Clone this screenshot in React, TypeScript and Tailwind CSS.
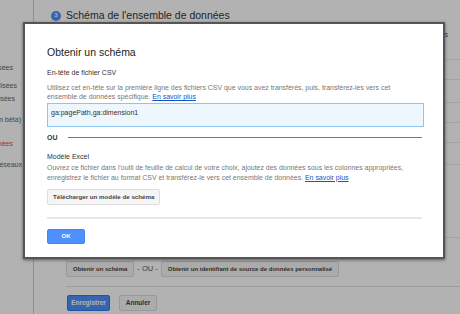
import React from 'react';

const sideItems = [
  { label: 'Tables de données personnalisées', pad: 'pr-[20px]', mt: 'mt-0', color: 'text-[#666]' },
  { label: 'Dimensions personnalisées', pad: 'pr-[16px]', mt: 'mt-[6px]', color: 'text-[#666]' },
  { label: 'Métriques personnalisées', pad: 'pr-[18px]', mt: 'mt-[1px]', color: 'text-[#666]' },
  { label: 'Paramètres des données (en bêta)', pad: 'pr-[12px]', mt: 'mt-[9px]', color: 'text-[#666]' },
  { label: 'Importation de données', pad: 'pr-[20px]', mt: 'mt-[12px]', color: 'text-[#dd4b39]' },
  { label: 'Paramètres des réseaux', pad: 'pr-[11px]', mt: 'mt-[9px]', color: 'text-[#666]' },
];

function Sidebar() {
  return (
    <div className="w-[34px] shrink-0 border-r border-[#cfcfcf] pt-[62px] overflow-hidden">
      {sideItems.map((it) => (
        <div
          key={it.label}
          className={`h-[12px] flex items-center justify-end whitespace-nowrap text-[7px] ${it.pad} ${it.mt} ${it.color}`}
        >
          {it.label}
        </div>
      ))}
    </div>
  );
}

function Page() {
  return (
    <div className="flex h-full">
      <Sidebar />
      <div className="flex-1 flex flex-col">
        {/* header */}
        <div className="h-[60px] border-b border-[#e8e8e8] pl-[17px] pt-[10px]">
          <div className="flex items-center gap-[5px]">
            <div className="w-[10px] h-[10px] rounded-full bg-[#4d90fe] flex items-center justify-center text-white text-[6px] font-bold">
              3
            </div>
            <span className="text-[10.5px] leading-[11px] text-[#333]">Schéma de l'ensemble de données</span>
          </div>
          <div className="flex justify-end pr-[12px] mt-[9px] text-[7px] text-[#15c]">Aide sur les schémas</div>
        </div>
        <div className="h-[20px] border-b border-[#e8e8e8]" />
        <div className="h-[23px] border-b border-[#e8e8e8]" />
        <div className="h-[20px] border-b border-[#e8e8e8]" />
        <div className="h-[20px] border-b border-[#e8e8e8]" />
        <div className="h-[22px] border-b border-[#e8e8e8]" />
        <div className="h-[73px] border-b border-[#e8e8e8]" />
        {/* actions */}
        <div className="ml-[32px] border-b border-[#e3e3e3] pt-[23px] pb-[9px] flex items-center gap-[2px]">
          <button className="h-[16px] px-[6px] bg-[#f5f5f5] border border-[#dcdcdc] rounded-[2px] text-[6px] font-bold text-[#444]">
            Obtenir un schéma
          </button>
          <span className="text-[7.5px] text-[#555] px-[1px]">- OU -</span>
          <button className="h-[16px] px-[6px] bg-[#f5f5f5] border border-[#dcdcdc] rounded-[2px] text-[6px] font-bold text-[#444]">
            Obtenir un identifiant de source de données personnalisé
          </button>
        </div>
        <div className="ml-[33px] pt-[8px] flex gap-[9px]">
          <button className="h-[16px] w-[43px] bg-[#4d90fe] border border-[#3079ed] rounded-[2px] text-[6.5px] font-bold text-white">
            Enregistrer
          </button>
          <button className="h-[16px] w-[38px] bg-[#f5f5f5] border border-[#dcdcdc] rounded-[2px] text-[6.5px] font-bold text-[#444]">
            Annuler
          </button>
        </div>
      </div>
    </div>
  );
}

function SchemaDialog() {
  return (
    <div className="absolute left-[23px] top-[22px] w-[422px] h-[237px] bg-white border-2 border-[#555] shadow-[0_1px_3px_rgba(0,0,0,0.5)] pl-[22px] pr-[21px] pt-[22px]">
      <h2 className="text-[10.5px] leading-[12px] text-[#222]">Obtenir un schéma</h2>

      <div className="mt-[10px] text-[7px] leading-[9px] text-[#333]">En-tête de fichier CSV</div>
      <p className="mt-[6px] text-[6.95px] leading-[9px] text-[#777]">
        Utilisez cet en-tête sur la première ligne des fichiers CSV que vous avez transférés, puis, transférez-les vers cet
        <br />
        ensemble de données spécifique. <a className="text-[#15c] underline">En savoir plus</a>
      </p>
      <div className="mt-[2px] w-[377px] h-[24px] bg-[#eef6fe] border border-[#8cc4f3] px-[3px] pt-[4px] text-[7px] leading-[9px] text-[#333]">
        ga:pagePath,ga:dimension1
      </div>

      <div className="mt-[6px] flex items-center gap-[10px]">
        <span className="text-[7px] leading-[9px] font-bold text-[#333]">OU</span>
        <div className="flex-1 h-px bg-[#777]" />
      </div>

      <div className="mt-[10px] text-[7px] leading-[9px] text-[#333]">Modèle Excel</div>
      <p className="mt-[2px] text-[6.95px] leading-[9.5px] text-[#777]">
        Ouvrez ce fichier dans l'outil de feuille de calcul de votre choix, ajoutez des données sous les colonnes appropriées,
        <br />
        enregistrez le fichier au format CSV et transférez-le vers cet ensemble de données. <a className="text-[#15c] underline">En savoir plus</a>
      </p>
      <button className="mt-[2px] h-[16px] px-[5px] bg-[#f5f5f5] border border-[#dedede] rounded-[2px] text-[6.2px] font-bold text-[#444]">
        Télécharger un modèle de schéma
      </button>

      <div className="mt-[11px] h-[2px] bg-[#e8e8e8]" />

      <button className="mt-[10px] w-[38px] h-[15px] bg-[#4d90fe] border border-[#4787ed] rounded-[2px] text-[6px] font-bold text-white">
        OK
      </button>
    </div>
  );
}

export default function App() {
  return (
    <div className="relative w-[460px] h-[314px] overflow-hidden bg-white font-['Liberation_Sans',Arial,sans-serif]">
      <Page />
      <div className="absolute inset-0 bg-black/30" />
      <SchemaDialog />
    </div>
  );
}
